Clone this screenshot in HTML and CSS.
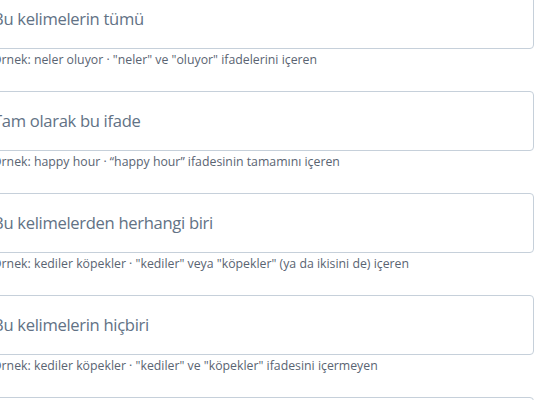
FILE: index.html
```html
<!DOCTYPE html>
<html lang="tr">
<head>
<meta charset="utf-8">
<link rel="stylesheet" href="styles.css">
</head>
<body>
<div class="form">
  <div class="field">
    <div class="input">Bu kelimelerin tümü</div>
    <div class="hint">Örnek: neler oluyor · "neler" ve "oluyor" ifadelerini içeren</div>
  </div>
  <div class="field">
    <div class="input">Tam olarak bu ifade</div>
    <div class="hint">Örnek: happy hour · “happy hour” ifadesinin tamamını içeren</div>
  </div>
  <div class="field">
    <div class="input">Bu kelimelerden herhangi biri</div>
    <div class="hint">Örnek: kediler köpekler · "kediler" veya "köpekler" (ya da ikisini de) içeren</div>
  </div>
  <div class="field">
    <div class="input">Bu kelimelerin hiçbiri</div>
    <div class="hint">Örnek: kediler köpekler · "kediler" ve "köpekler" ifadesini içermeyen</div>
  </div>
  <div class="field">
    <div class="input"></div>
  </div>
</div>
</body>
</html>
```
FILE: styles.css
```css
html, body {
  margin: 0;
  padding: 0;
  background: #ffffff;
  overflow: hidden;
}
body {
  font-family: "Open Sans", "Noto Sans", sans-serif;
}
.form {
  display: flex;
  flex-direction: column;
  gap: 23px;
  margin-top: -11px;
  margin-left: -20px;
  width: 554px;
}
.field {
  display: flex;
  flex-direction: column;
  gap: 3px;
}
.input {
  box-sizing: border-box;
  height: 60px;
  border: 1px solid #c6d0da;
  border-radius: 4px;
  padding: 0 12px 1px;
  display: flex;
  align-items: center;
  font-size: 16.6px;
  letter-spacing: -0.32px;
  color: #627285;
}
.hint {
  padding-left: 12px;
  font-size: 12.3px;
  line-height: 16px;
  color: #5a6472;
}
```
